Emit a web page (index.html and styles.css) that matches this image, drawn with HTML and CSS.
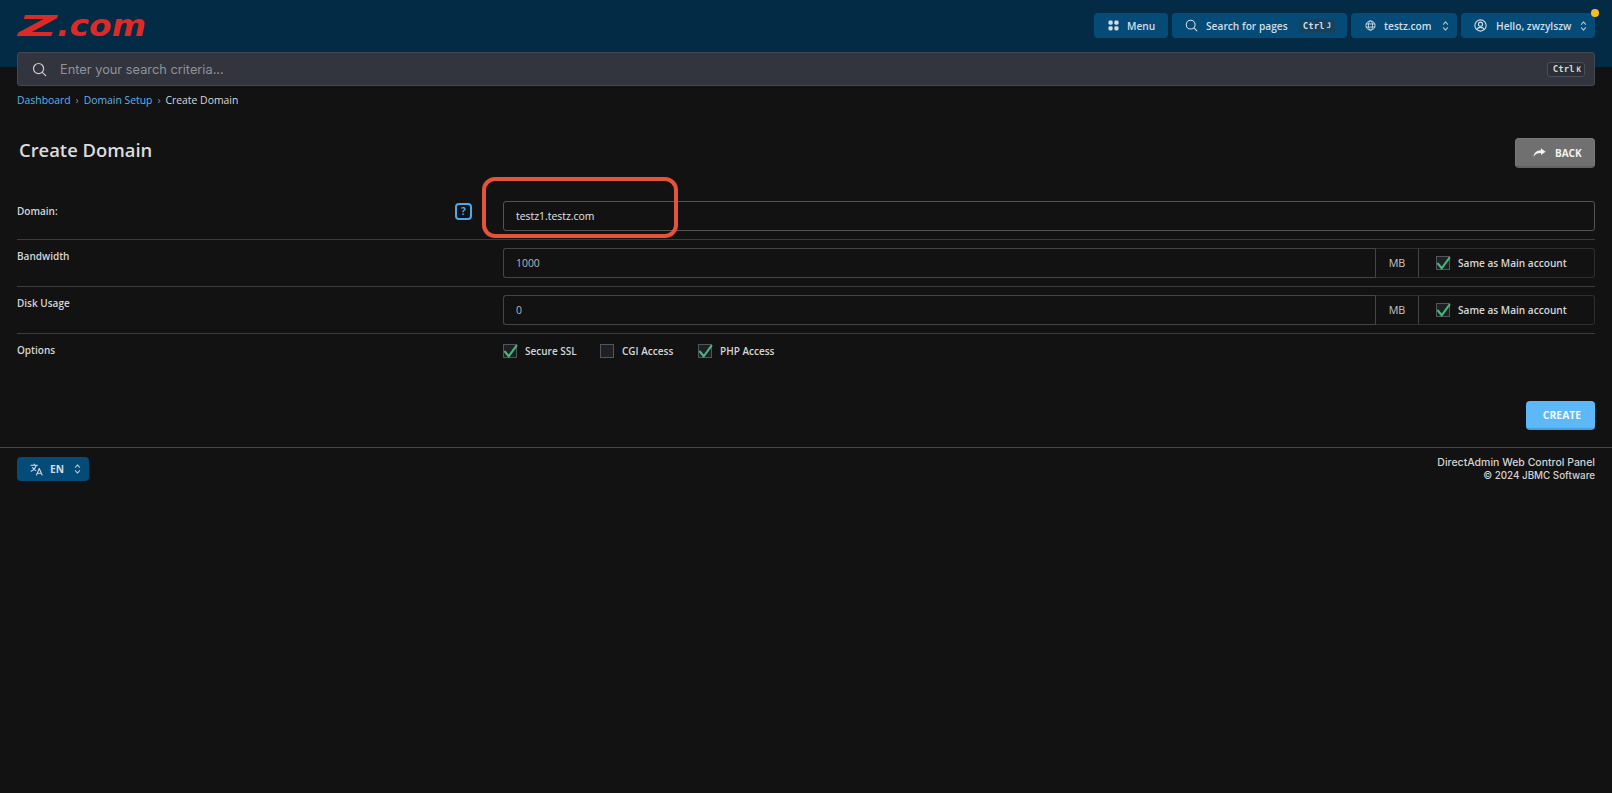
FILE: index.html
```html
<!DOCTYPE html>
<html lang="en">
<head>
<meta charset="utf-8">
<title>Create Domain</title>
<link rel="stylesheet" href="styles.css">
</head>
<body>
<svg class="defs" width="0" height="0" aria-hidden="true">
  <symbol id="i-search" viewBox="0 0 16 16"><circle cx="7" cy="7" r="5.4" fill="none" stroke="currentColor" stroke-width="1.3"/><path d="M11 11l3.6 3.6" fill="none" stroke="currentColor" stroke-width="1.3" stroke-linecap="round"/></symbol>
  <symbol id="i-updown" viewBox="0 0 8 14"><path d="M1.5 5L4 2.2 6.5 5M1.5 9L4 11.8 6.5 9" fill="none" stroke="currentColor" stroke-width="1.2" stroke-linecap="round" stroke-linejoin="round"/></symbol>
  <symbol id="i-check" viewBox="0 0 16 16"><path d="M1.500 8l4.600 5.600L14.800 1.800" fill="none" stroke="#47b77c" stroke-width="2.200"/></symbol>
</svg>
<header class="topbar">
  <svg class="logo" viewBox="0 0 128 22" role="img" aria-label="Z.com"><text x="0" y="21" textLength="39" lengthAdjust="spacingAndGlyphs" class="logo-text logo-text--z">Z</text><text x="39" y="21" textLength="89" lengthAdjust="spacingAndGlyphs" class="logo-text logo-text--com">.com</text></svg>
  <nav class="top-actions">
    <button class="top-btn top-btn--menu">
      <svg class="ico" viewBox="0 0 12 12"><rect x="0.5" y="0.5" width="4.6" height="4.6" rx="1.6" fill="currentColor"/><rect x="6.9" y="0.5" width="4.6" height="4.6" rx="1.6" fill="currentColor"/><rect x="0.5" y="6.9" width="4.6" height="4.6" rx="1.6" fill="currentColor"/><rect x="6.9" y="6.9" width="4.6" height="4.6" rx="1.6" fill="currentColor"/></svg>
      <span>Menu</span>
    </button>
    <button class="top-btn top-btn--search">
      <svg class="ico ico--l"><use href="#i-search"/></svg>
      <span>Search for pages</span>
      <kbd class="kbd-dark">Ctrl<small>J</small></kbd>
    </button>
    <button class="top-btn top-btn--domain">
      <svg class="ico" viewBox="0 0 12 12"><g fill="none" stroke="currentColor" stroke-width="1"><circle cx="6" cy="6" r="5"/><ellipse cx="6" cy="6" rx="2.2" ry="5"/><path d="M1 4.3h10M1 7.7h10"/></g></svg>
      <span>testz.com</span>
      <svg class="updown"><use href="#i-updown"/></svg>
    </button>
    <button class="top-btn top-btn--user">
      <svg class="ico ico--l" viewBox="0 0 12 12"><g fill="none" stroke="currentColor" stroke-width="1"><circle cx="6" cy="6" r="5.2"/><circle cx="6" cy="4.8" r="1.9"/><path d="M2.6 9.6c.8-1.5 2-1.9 3.400-1.900s2.600.4 3.400 1.900"/></g></svg>
      <span>Hello, zwzylszw</span>
      <svg class="updown"><use href="#i-updown"/></svg>
      <i class="notify-dot"></i>
    </button>
  </nav>
</header>

<div class="page">
  <div class="searchbar">
    <svg class="searchbar-ico"><use href="#i-search"/></svg>
    <span class="searchbar-text">Enter your search criteria...</span>
    <kbd class="kbd-line">Ctrl<small>K</small></kbd>
  </div>

  <div class="crumbs">
    <a>Dashboard</a><span class="sep">&#8250;</span><a>Domain Setup</a><span class="sep">&#8250;</span><span class="current">Create Domain</span>
  </div>

  <div class="title-row">
    <h1>Create Domain</h1>
    <button class="btn-back">
      <svg class="back-ico" viewBox="0 0 16 12"><path d="M9.800 0.800L15.500 5 9.800 9V6.600C6 6.500 3 7.600 0.700 11.300 1 7 4 3.500 9.800 3.300z" fill="currentColor"/></svg>
      <span>BACK</span>
    </button>
  </div>

  <form class="form">
    <div class="row">
      <div class="label label--help"><span>Domain:</span><i class="help">?</i></div>
      <div class="field"><div class="input input--strong input--value">testz1.testz.com</div></div>
      <div class="highlight"></div>
    </div>
    <div class="row">
      <div class="label"><span>Bandwidth</span></div>
      <div class="field group">
        <div class="input input--grp">1000</div>
        <div class="unit">MB</div>
        <label class="same"><i class="cb"><svg class="cb-check"><use href="#i-check"/></svg></i><span>Same as Main account</span></label>
      </div>
    </div>
    <div class="row">
      <div class="label"><span>Disk Usage</span></div>
      <div class="field group">
        <div class="input input--grp">0</div>
        <div class="unit">MB</div>
        <label class="same"><i class="cb"><svg class="cb-check"><use href="#i-check"/></svg></i><span>Same as Main account</span></label>
      </div>
    </div>
    <div class="row row--options">
      <div class="label"><span>Options</span></div>
      <div class="options">
        <label class="opt opt--ssl"><i class="cb"><svg class="cb-check"><use href="#i-check"/></svg></i><span>Secure SSL</span></label>
        <label class="opt opt--cgi"><i class="cb"></i><span>CGI Access</span></label>
        <label class="opt"><i class="cb"><svg class="cb-check"><use href="#i-check"/></svg></i><span>PHP Access</span></label>
      </div>
    </div>
    <div class="actions"><button type="button" class="btn-create">CREATE</button></div>
  </form>
</div>

<footer class="footer">
  <button class="lang">
    <svg class="lang-ico" viewBox="0 0 14 14"><g fill="none" stroke="currentColor" stroke-width="1.100" stroke-linecap="round" stroke-linejoin="round"><path d="M1 2.500h7M4.500 1v1.500M6.500 2.500C6 5 4 7.500 1.200 8.800M2.800 4.800c.8 1.500 2 2.600 3.400 3.300"/><path d="M7 13l3-7 3 7M8 11h4"/></g></svg>
    <span>EN</span>
    <svg class="updown"><use href="#i-updown"/></svg>
  </button>
  <div class="legal">
    <div class="legal-name">DirectAdmin Web Control Panel</div>
    <div class="legal-copy">© 2024 JBMC Software</div>
  </div>
</footer>
</body>
</html>
```

FILE: styles.css
```css
* { box-sizing: border-box; }
html, body { margin: 0; padding: 0; }
body {
  background: #121212;
  color: #d6d6d6;
  font-family: "Open Sans", "Liberation Sans", sans-serif;
  font-size: 10px;
  min-height: 793px;
}
.defs { position: absolute; }
button { font: inherit; color: inherit; border: 0; cursor: pointer; }

/* top bar */
.topbar {
  height: 67px;
  background: #032b46;
  padding: 13px 17px 0 18px;
  display: flex;
  justify-content: space-between;
  align-items: flex-start;
}
.logo { width: 128px; height: 22px; margin-top: 2px; display: block; overflow: visible; }
.logo-text {
  font-family: "DejaVu Sans", sans-serif;
  font-weight: 700;
  font-style: italic;
  fill: #dc2a27;
}
.logo-text--z { font-size: 29px; }
.logo-text--com { font-size: 31px; }
.top-actions { display: flex; gap: 4px; }
.top-btn {
  height: 25px;
  background: #054b78;
  border-radius: 4px;
  color: #d3dde5;
  font-size: 10.200px;
  font-weight: 600;
  white-space: nowrap;
  display: flex;
  align-items: center;
  gap: 8px;
  padding: 0 8px 0 14px;
  position: relative;
}
.top-btn--menu { width: 74px; }
.top-btn--search { width: 175px; padding-left: 13px; }
.top-btn--domain { width: 106px; }
.top-btn--user { width: 134px; padding-left: 13px; gap: 9px; }
.ico { width: 11px; height: 11px; flex: none; color: #d3dde5; }
.ico--l { width: 13px; height: 13px; }
.updown { width: 7px; height: 12px; color: #b9c6d0; flex: none; margin-left: auto; }
.kbd-dark {
  background: #14425f;
  border-radius: 3px;
  font-family: "DejaVu Sans Mono", monospace;
  font-size: 9px;
  font-weight: 700;
  height: 14px;
  line-height: 14px;
  padding: 0 4px;
  margin-left: auto;
  margin-right: 4px;
  display: inline-flex;
}
kbd small { font-size: 7.500px; margin-left: 2px; }
.notify-dot {
  position: absolute;
  right: -4px;
  top: -4px;
  width: 8px;
  height: 8px;
  background: #fbb924;
  border-radius: 50%;
}

/* page */
.page { padding: 0 17px; }
.searchbar {
  height: 34px;
  margin-top: -15px;
  background: #32353d;
  border: 1px solid #434852;
  border-radius: 3px;
  display: flex;
  align-items: center;
  padding: 0 9px 0 14px;
  position: relative;
}
.searchbar-ico { width: 15px; height: 15px; color: #c9cbce; flex: none; }
.searchbar-text {
  margin-left: 13px;
  font-family: "Inter", "Open Sans", sans-serif;
  font-size: 12.800px;
  color: #8f939a;
  flex: 1;
}
.kbd-line {
  border: 1px solid #4a4e58;
  border-radius: 3px;
  background: #2b2e35;
  font-family: "DejaVu Sans Mono", monospace;
  font-size: 9px;
  font-weight: 700;
  color: #d6d6d6;
  height: 15px;
  line-height: 13px;
  padding: 0 3px 0 5px;
  display: inline-flex;
}
.crumbs {
  height: 16px;
  margin-top: 6px;
  line-height: 16px;
  font-size: 10.400px;
  display: flex;
  align-items: center;
}
.crumbs a { color: #5db2ea; }
.crumbs .sep { color: #8a8a8a; width: 13px; text-align: center; }
.crumbs .current { color: #d9d9d9; }

.title-row {
  margin-top: 30px;
  height: 30px;
  display: flex;
  justify-content: space-between;
  align-items: flex-start;
  padding-left: 2px;
}
h1 {
  margin: 0;
  font-size: 18.400px;
  line-height: 24px;
  font-weight: 600;
  color: #dcdcdc;
}
.btn-back {
  width: 80px;
  height: 30px;
  background: #707070;
  border: 1px solid #7a7a7a;
  border-bottom: 2px solid #626262;
  border-radius: 4px;
  color: #f2f2f2;
  font-size: 10px;
  font-weight: 700;
  display: flex;
  align-items: center;
  padding: 0 0 0 17px;
  gap: 9px;
}
.back-ico { width: 13px; height: 11px; }

/* form */
.form { margin-top: 25px; }
.row {
  display: grid;
  grid-template-columns: 486px 1fr;
  padding: 8px 0;
  border-bottom: 1px solid #3c3c3c;
  position: relative;
}
.label {
  line-height: 16px;
  font-size: 10px;
  font-weight: 600;
  color: #d6d6d6;
}
.label--help {
  display: flex;
  justify-content: space-between;
  align-items: flex-start;
  padding: 2px 31px 0 0;
}
.help {
  width: 17px;
  height: 17px;
  border: 2px solid #4ea9e4;
  border-radius: 4px;
  color: #4ea9e4;
  font-style: normal;
  font-weight: 700;
  font-size: 10px;
  line-height: 13px;
  text-align: center;
}
.input {
  height: 30px;
  line-height: 28px;
  padding: 0 12px;
  font-size: 10.400px;
  color: #b8b8b8;
  border: 1px solid #454545;
  border-radius: 3px;
}
.input--strong { border-color: #555; }
.input--value { color: #e4e4e4; }
.field.group { display: flex; }
.input--grp { flex: 1; border-radius: 3px 0 0 3px; border-right-width: 0; }
.unit {
  width: 44px;
  height: 30px;
  line-height: 28px;
  text-align: center;
  font-size: 10.800px;
  color: #c4c4c4;
  border: 1px solid #454545;
  border-top-color: #2e2e2e;
  border-bottom-color: #2e2e2e;
}
.same {
  width: 176px;
  height: 30px;
  border: 1px solid #2e2e2e;
  border-left: 0;
  border-radius: 0 3px 3px 0;
  display: flex;
  align-items: center;
  gap: 8px;
  padding-left: 17px;
  font-weight: 600;
  font-size: 10.100px;
}
.cb {
  width: 14px;
  height: 14px;
  border: 1px solid #50555e;
  background: #1f2024;
  position: relative;
  flex: none;
  display: block;
}
.cb-check { position: absolute; left: -1px; top: -2px; width: 15px; height: 16px; }
.row--options { border-bottom: 0; padding: 10px 0 0; }
.row--options .label { margin-top: -2px; }
.options { display: flex; }
.opt { display: flex; align-items: center; gap: 8px; font-weight: 600; font-size: 10px; height: 14px; }
.opt--ssl { width: 97px; }
.opt--cgi { width: 98px; }
.actions { display: flex; justify-content: flex-end; margin-top: 43px; }
.btn-create {
  width: 69px;
  height: 29px;
  padding: 0 0 0 3px;
  background: #5cb8f7;
  border-bottom: 2px solid #459fdf;
  border-radius: 4px;
  color: #f2f8fd;
  font-size: 10.400px;
  font-weight: 700;
}
.highlight {
  position: absolute;
  left: 465px;
  top: -16px;
  width: 196px;
  height: 61px;
  border: 4px solid #e5533d;
  border-radius: 13px;
  pointer-events: none;
}

/* footer */
.footer {
  margin-top: 17px;
  border-top: 1px solid #444750;
  padding: 9px 17px 0;
  display: flex;
  justify-content: space-between;
  align-items: flex-start;
}
.lang {
  width: 72px;
  height: 24px;
  background: #054b78;
  border-radius: 4px;
  color: #d3dde5;
  font-weight: 700;
  font-size: 10.200px;
  display: flex;
  align-items: center;
  gap: 7px;
  padding: 0 8px 0 13px;
}
.lang-ico { width: 13px; height: 13px; flex: none; }
.legal {
  margin-top: -1px;
  text-align: right;
  font-family: "Inter", "Open Sans", sans-serif;
  line-height: 13px;
  color: #d2d2d2;
  font-weight: 500;
}
.legal-name { font-size: 10.500px; }
.legal-copy { font-size: 9.800px; }
```
